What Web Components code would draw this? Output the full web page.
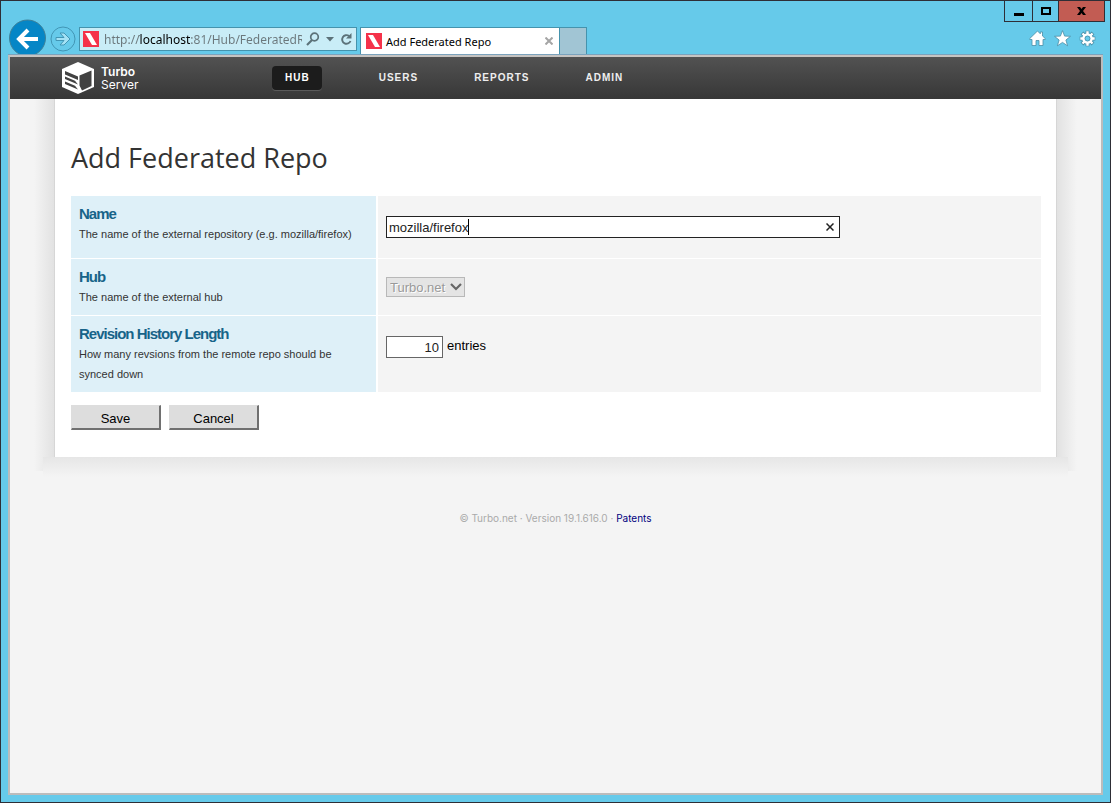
<!DOCTYPE html>
<html lang="en">
<head>
<meta charset="utf-8">
<title>Add Federated Repo</title>
<style>
  body { margin: 0; font-family: "Liberation Sans", Arial, sans-serif; }
</style>
</head>
<body>
<browser-window>
  <site-nav></site-nav>
  <page-panel>
    <repo-form></repo-form>
  </page-panel>
  <site-footer></site-footer>
</browser-window>

<template id="fav-icon">
  <style>
    :host { display: block; flex: none; width: 16px; height: 16px; }
    svg { display: block; }
  </style>
  <svg width="16" height="16" viewBox="0 0 16 16" aria-hidden="true"><path fill="#f5324a" d="M0 0h16v16H0z"/><path fill="#fff" d="M2 2h5l7 12H9z"/></svg>
</template>

<template id="browser-window">
  <style>
    :host { display: flex; flex-direction: column; box-sizing: border-box; min-height: 100vh; border: 1px solid #2e2e36; background: #66caea; padding: 0 7px 7px; }
    main { flex: 1; background: #f4f4f4; border: 2px solid #bcbcbc; border-top: 2px solid #c6c4c2; box-shadow: 0 -1px #7ba3bd; margin-top: 1px; }
  </style>
  <browser-toolbar></browser-toolbar>
  <main><slot></slot></main>
</template>

<template id="browser-toolbar">
  <style>
    :host { display: flex; height: 53px; margin-right: -2px; font: 12px "Noto Sans", "Segoe UI", sans-serif; }
    button { appearance: none; margin: 0; padding: 0; border: 0; background: none; display: flex; align-items: center; justify-content: center; font: inherit; }
    svg { display: block; }
    .left { flex: 1; min-width: 0; display: flex; align-items: flex-start; overflow: hidden; padding-top: 18px; }
    .left, .left * { box-sizing: border-box; }
    .back { flex: none; margin-left: 1px; }
    .forward { flex: none; margin: 7px 3px 0 4px; }
    .address { flex: none; margin-top: 8px; width: 278px; height: 24px; border: 1px solid #4593ad; background: #c9edf7; display: flex; align-items: center; padding-left: 3px; }
    .address input { flex: none; width: 198px; height: 22px; margin: 0 0 0 5px; padding: 0; border: 0; outline: 0; font: inherit; color: transparent;
      background: linear-gradient(90deg, #6b777b 35px, #000 35px, #000 86px, #6b777b 86px); -webkit-background-clip: text; background-clip: text; }
    .address button { height: 22px; }
    .find { width: 22px; } .drop { width: 12px; } .reload { width: 20px; }
    .tab { flex: none; margin: 8px 0 0 3px; width: 200px; height: 27px; border: 1px solid #4593ad; border-bottom: 0; background: #fff; display: flex; align-items: center; padding: 0 6px 0 5px; }
    .tab span { flex: 1; margin-left: 4px; white-space: nowrap; font-size: 11px; }
    .new { flex: none; margin-top: 8px; width: 27px; height: 27px; border: 1px solid #4593ad; border-left: 0; border-bottom: 0; background: #a1c5d4; }
    .right { display: flex; flex-direction: column; align-items: flex-end; }
    .win { display: flex; border: 1px solid #2e2e36; border-top: 0; background: #66caea; }
    .win button { height: 20px; border-left: 1px solid #2e2e36; }
    .win .min { width: 27px; border-left: 0; } .win .max { width: 26px; } .win .close { width: 46px; background: #c25c53; }
    .tools { display: flex; gap: 8px; margin: 8px 9px 0 0; }
  </style>
  <div class="left">
    <button class="back" aria-label="Back"><svg width="37" height="38" viewBox="0 0 37 38"><circle cx="18.5" cy="19" r="18" fill="#0586c6" stroke="#3f8199"/><path d="M29 20H11M19 11l-9 9 9 9" fill="none" stroke="#fff" stroke-width="4"/></svg></button>
    <button class="forward" aria-label="Forward"><svg width="26" height="26" viewBox="0 0 26 26"><circle cx="13" cy="13" r="12" fill="none" stroke="#4296b5"/><path d="M6 11.500v3h8l-4 4.500h4l6-6-6-6h-4l4 4.500z" fill="#a4e2f5" stroke="#4296b5"/></svg></button>
    <div class="address">
      <fav-icon></fav-icon>
      <input aria-label="Address" value="http://localhost:81/Hub/FederatedRepo" spellcheck="false">
      <button class="find" aria-label="Search"><svg width="14" height="14" viewBox="0 0 14 14"><circle cx="8.500" cy="5" r="3.800" fill="none" stroke="#5c7279" stroke-width="1.700"/><path d="M6 8l-5 5" stroke="#5c7279" stroke-width="2.200"/></svg></button>
      <button class="drop" aria-label="Show addresses"><svg width="8" height="5" viewBox="0 0 8 5"><path d="M0 0h8L4 4.500z" fill="#5c7279"/></svg></button>
      <button class="reload" aria-label="Refresh"><svg width="13" height="13" viewBox="0 0 13 13"><path d="M9 3A4.300 4.300 0 1 0 10.500 8" fill="none" stroke="#5c7279" stroke-width="1.900"/><path d="M6 5.500h5.500V0z" fill="#5c7279"/></svg></button>
    </div>
    <div class="tab"><fav-icon></fav-icon><span>Add Federated Repo</span><button aria-label="Close tab"><svg width="8" height="8" viewBox="0 0 8 8"><path d="M.5.5l7 7M7.500.5l-7 7" stroke="#a5a5a5" stroke-width="2"/></svg></button></div>
    <button class="new" aria-label="New tab"></button>
  </div>
  <div class="right">
    <div class="win">
      <button class="min" aria-label="Minimize"><svg width="10" height="9"><path d="M0 6h10v3H0z"/></svg></button>
      <button class="max" aria-label="Maximize"><svg width="10" height="8"><path d="M1 1h8v6H1z" fill="none" stroke="#000" stroke-width="2"/></svg></button>
      <button class="close" aria-label="Close"><svg width="9" height="8" viewBox="0 0 9 8"><path d="M0 0h3l1.500 2L6 0h3L6 4l3 4H6L4.500 6 3 8H0l3-4z"/></svg></button>
    </div>
    <div class="tools">
      <button aria-label="Home"><svg width="17" height="17" viewBox="0 0 17 17"><path d="M8.500 1L.8 8.500v1h2.200v6h4V10.500h3v5h4v-6h2.200v-1L13.500 6V2h-2.200v1.800z" fill="#fff" stroke="#4a8da6" stroke-width=".8"/></svg></button>
      <button aria-label="Favorites"><svg width="17" height="17" viewBox="0 0 17 17"><path d="M8.500.6l2.100 5.500 5.900.2-4.600 3.700 1.700 5.800-5.100-3.400-5.100 3.400 1.700-5.800L.5 6.300l5.900-.2z" fill="#fff" stroke="#4a8da6" stroke-width=".8"/></svg></button>
      <button aria-label="Tools"><svg width="17" height="17" viewBox="0 0 17 17"><g stroke="#4a8da6" stroke-width="4"><path d="M8.500.7v15.600M.7 8.500h15.600M3 3l11 11M14 3L3 14"/></g><circle cx="8.500" cy="8.500" r="6" fill="#4a8da6"/><g stroke="#fff" stroke-width="2.400"><path d="M8.500 1.300v14.400M1.300 8.500h14.400M3.500 3.500l10 10M13.500 3.500l-10 10"/></g><circle cx="8.500" cy="8.500" r="4" fill="#66caea" stroke="#fff" stroke-width="2.600"/><circle cx="8.500" cy="8.500" r="2.500" fill="#66caea" stroke="#4a8da6" stroke-width=".8"/></svg></button>
    </div>
  </div>
</template>

<template id="site-nav">
  <style>
    :host { display: flex; align-items: center; height: 42px; background: linear-gradient(#525252, #373737); color: #fff; }
    .logo { display: flex; align-items: center; gap: 7px; width: 210px; box-sizing: border-box; margin-left: 52px; color: #fff; text-decoration: none; font: 12px/13px Inter, sans-serif; }
    .logo strong { display: block; font-weight: 600; }
    .logo svg { display: block; }
    nav { display: flex; gap: 30px; }
    nav a { display: block; padding: 0 13px; font-size: 10px; letter-spacing: 1px; line-height: 24px; font-weight: bold; color: #eee; text-decoration: none; border-radius: 4px; }
    nav a[aria-current] { padding: 0 12px 0 13px; margin-right: 14px; background: #1c1c1c; box-shadow: 0 1px #5a5a5a; color: #fff; }
  </style>
  <a class="logo" href="#home">
    <svg width="32" height="32" viewBox="0 0 32 32" aria-hidden="true"><path fill="#fff" d="M16 0l16 7v18l-16 7-16-7V7z"/><path fill="#424242" d="M17.500 13.500l12-5V24l-9.500 4.500-2.500-5zM3 9l13 5.500V18L3 12.500zM3 14.500l10 4.200 3 3.800L3 17zM3 19.500l10 4.200 3 3.800L3 22z"/></svg>
    <span><strong>Turbo</strong>Server</span>
  </a>
  <nav>
    <a href="#hub" aria-current="page">HUB</a>
    <a href="#users">USERS</a>
    <a href="#reports">REPORTS</a>
    <a href="#admin">ADMIN</a>
  </nav>
</template>

<template id="page-panel">
  <style>
    :host { display: block; box-sizing: border-box; max-width: 1043px; margin: 0 auto; padding: 0 21px 20px;
      background:
        linear-gradient(#e6e6e6, #f4f4f4) center bottom / calc(100% - 18px) 20px no-repeat,
        linear-gradient(270deg, #e2e2e2, #f4f4f4) left top / 20px calc(100% - 6px) no-repeat,
        linear-gradient(90deg, #e2e2e2, #f4f4f4) right top / 20px calc(100% - 6px) no-repeat; }
    div { background: #fff; padding: 40px 15px 27px 16px; box-shadow: -1px 0 #d6d6d6, 1px 0 #d6d6d6; }
  </style>
  <div><slot></slot></div>
</template>

<template id="form-row">
  <style>
    :host { display: grid; grid-template-columns: 305px 1fr; column-gap: 2px; }
    .label { background: #def0f8; padding: 8px; font-size: 11px; line-height: 20px; color: #333; }
    .field { background: #f4f4f4; padding: 18px 8px; display: flex; align-items: flex-start; font-size: 13px; }
    ::slotted(label) { display: block; font-size: 15px; font-weight: bold; letter-spacing: -1px; color: #176489; }
  </style>
  <div class="label"><slot name="label"></slot><slot name="hint"></slot></div>
  <div class="field"><slot></slot></div>
</template>

<template id="repo-form">
  <style>
    :host { display: block; }
    h1 { margin: 0 0 19px; font: 400 27px/38px "Open Sans", "Segoe UI", sans-serif; color: #333; }
    .rows { display: grid; row-gap: 1px; }
    input, button, select { font: 13px "Liberation Sans", Arial, sans-serif; box-sizing: border-box; margin: 0; border-radius: 0; appearance: none; }
    .name { display: flex; flex: 0 1 454px; box-sizing: border-box; height: 22px; margin: 2px 0; border: 1px solid #222; background: #fff; }
    .name input { flex: 1; min-width: 0; border: 0; outline: 0; padding: 0 2px; color: #222;
      background: linear-gradient(#000, #000) 81px center / 1px 16px no-repeat; }
    .name button { width: 18px; border: 0; padding: 0; background: none; display: flex; align-items: center; justify-content: center; }
    .hub { display: grid; width: 79px; align-items: center; }
    .hub > * { grid-area: 1 / 1; }
    .hub svg { justify-self: end; margin-right: 3px; pointer-events: none; }
    select { width: 79px; height: 20px; border: 1px solid #b8b8b8; background: #e4e4e4; padding: 0 3px; color: #999; opacity: 1; text-shadow: 1px 1px #fff; }
    .count { width: 57px; height: 22px; margin: 2px 4px 2px 0; border: 1px solid #666; padding: 0 3px; text-align: right; color: #222; background: #fff; }
    .unit { line-height: 20px; color: #000; margin-top: 2px; }
    .actions { display: flex; gap: 8px; margin-top: 13px; }
    .actions button { width: 90px; height: 25px; padding: 2px 0 0; background: #ddd; border: 2px solid; border-color: #ddd #707070 #707070 #ddd; border-width: 1px 2px 2px 1px; color: #000; }
  </style>
  <form>
    <h1>Add Federated Repo</h1>
    <div class="rows">
      <form-row>
        <label slot="label" for="name">Name</label>
        <span slot="hint">The name of the external repository (e.g. mozilla/firefox)</span>
        <div class="name"><input id="name" value="mozilla/firefox" spellcheck="false"><button type="button" aria-label="Clear"><svg width="8" height="8" viewBox="0 0 8 8"><path d="M.5.5l7 7M7.500.5l-7 7" stroke="#222" stroke-width="1.500"/></svg></button></div>
      </form-row>
      <form-row>
        <label slot="label" for="hub">Hub</label>
        <span slot="hint">The name of the external hub</span>
        <div class="hub"><select id="hub" disabled><option>Turbo.net</option></select><svg width="12" height="8" viewBox="0 0 12 8"><path d="M1 1l5 5 5-5" fill="none" stroke="#666" stroke-width="2.200"/></svg></div>
      </form-row>
      <form-row>
        <label slot="label" for="count">Revision History Length</label>
        <span slot="hint">How many revsions from the remote repo should be synced down</span>
        <input class="count" id="count" value="10"><span class="unit">entries</span>
      </form-row>
    </div>
    <div class="actions"><button type="button">Save</button><button type="button">Cancel</button></div>
  </form>
</template>

<template id="site-footer">
  <style>
    :host { display: block; padding: 31px 0 20px; text-align: center; font: 10px/20px Inter, sans-serif; color: #aaa; }
    a { color: #000080; text-decoration: none; }
  </style>
  © Turbo.net · Version 19.1.616.0 · <a href="#patents">Patents</a>
</template>

<script>
  class TemplateElement extends HTMLElement {
    constructor() {
      super();
      const template = document.getElementById(this.localName);
      this.attachShadow({ mode: 'open' }).append(template.content.cloneNode(true));
    }
  }
  customElements.define('fav-icon', class extends TemplateElement {});
  customElements.define('browser-toolbar', class extends TemplateElement {});
  customElements.define('browser-window', class extends TemplateElement {});
  customElements.define('site-nav', class extends TemplateElement {});
  customElements.define('form-row', class extends TemplateElement {});
  customElements.define('repo-form', class extends TemplateElement {});
  customElements.define('page-panel', class extends TemplateElement {});
  customElements.define('site-footer', class extends TemplateElement {});
</script>
</body>
</html>
